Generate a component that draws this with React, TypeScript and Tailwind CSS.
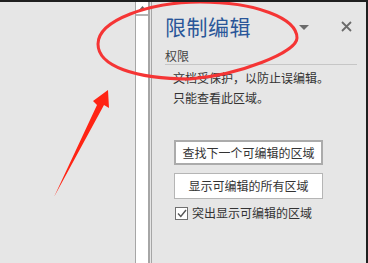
import React from 'react';

const font = { fontFamily: '"Noto Sans CJK SC", "Noto Sans", sans-serif' };

export default function App() {
  return (
    <div
      className="relative w-[368px] h-[263px] bg-[#e6e6e6] border-t-2 border-r-2 border-[#1f1f1f] flex overflow-hidden"
      style={font}
    >
      {/* document area */}
      <div className="w-[135px] shrink-0" />

      {/* scrollbar */}
      <div className="w-[15px] shrink-0 bg-white border-l border-r-2 border-[#a6a6a6] flex flex-col">
        <div className="h-[14px] border-b-2 border-[#b4b4b4] flex justify-center pt-[4px]">
          <svg width="7" height="4" viewBox="0 0 7 4">
            <path d="M0 4 L3.5 0 L7 4 Z" fill="#606060" />
          </svg>
        </div>
      </div>

      {/* task pane */}
      <div className="ml-[1px] flex-1 border-l border-[#a6a6a6] pl-[13px] pr-[9px] pt-[10px] text-[#333]">
        <div className="flex items-center">
          <h1 className="text-[21px] leading-[28px] text-[#2a5699] tracking-[0.5px]">限制编辑</h1>
          <div className="flex-1" />
          <svg width="10" height="5" viewBox="0 0 10 5" className="mt-[2px]">
            <path d="M0 0 L10 0 L5 5 Z" fill="#6b6b6b" />
          </svg>
          <svg width="11" height="11" viewBox="0 0 11 11" className="ml-[32px] mr-[5px] mt-[1px]">
            <path d="M1 1 L10 10 M10 1 L1 10" stroke="#6b6b6b" strokeWidth="1.8" />
          </svg>
        </div>
        <div className="mt-[8px] text-[12px] leading-[16px] text-[#444] border-b border-[#c6c6c6]">权限</div>

        <div className="pl-[8px] pt-[3px] text-[12px] leading-[20px]">
          <p>文档受保护，以防止误编辑。</p>
          <p>只能查看此区域。</p>
        </div>

        <div className="pl-[9px] mt-[32px] flex flex-col text-[12px] text-[#333]">
          <button className="w-[149px] h-[25px] bg-white border-2 border-[#ababab] leading-[20px]">
            查找下一个可编辑的区域
          </button>
          <button className="mt-[8px] w-[149px] h-[26px] bg-white border border-[#b5b5b5] leading-[22px]">
            显示可编辑的所有区域
          </button>
          <label className="mt-[7px] flex items-center gap-[4px] leading-[14px]">
            <span className="w-[13px] h-[13px] ml-[1px] bg-white border border-[#707070] flex items-center justify-center">
              <svg width="10" height="9" viewBox="0 0 10 9">
                <path d="M1 4.5 L3.8 7.5 L9 1" stroke="#555" strokeWidth="1.4" fill="none" />
              </svg>
            </span>
            突出显示可编辑的区域
          </label>
        </div>
      </div>

      {/* annotation overlay */}
      <svg className="absolute left-0 top-[-2px] pointer-events-none" width="368" height="263" viewBox="0 0 368 263">
        <path
          d="M 98 44 C 98 20, 150 2, 200 2 C 255 2, 297 18, 297 38 C 297 52, 240 75, 190 79 C 135 79, 98 66, 98 44 Z"
          fill="none"
          stroke="#f53535"
          strokeWidth="3"
        />
        <path
          d="M 54 197 L 97 105 L 93 101 L 108 90 L 109 108 L 104 105 Z"
          fill="#ff2414"
        />
      </svg>
    </div>
  );
}
